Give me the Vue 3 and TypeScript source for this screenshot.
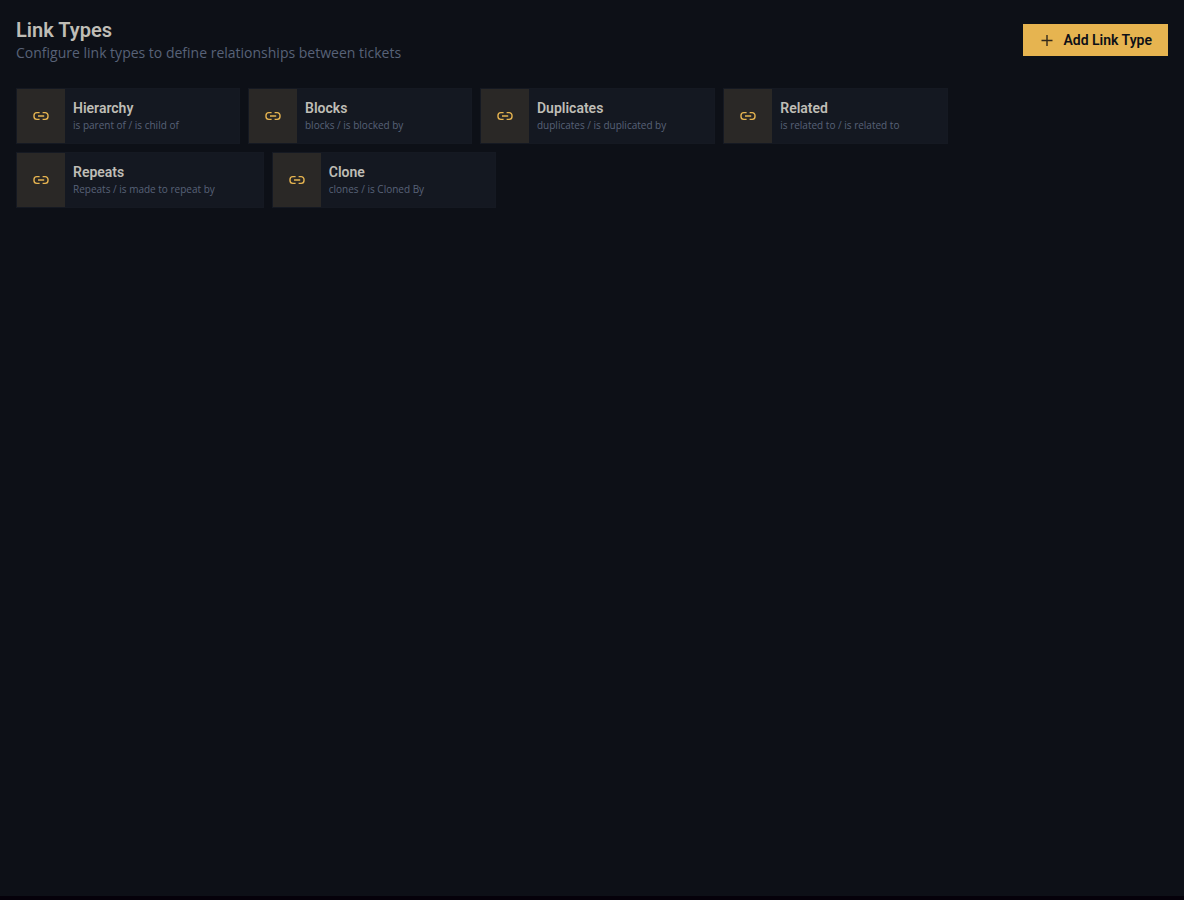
<script setup lang="ts">
interface LinkType {
  id: number
  name: string
  outward: string
  inward: string
}

const linkTypes: LinkType[] = [
  { id: 1, name: 'Hierarchy', outward: 'is parent of', inward: 'is child of' },
  { id: 2, name: 'Blocks', outward: 'blocks', inward: 'is blocked by' },
  { id: 3, name: 'Duplicates', outward: 'duplicates', inward: 'is duplicated by' },
  { id: 4, name: 'Related', outward: 'is related to', inward: 'is related to' },
  { id: 5, name: 'Repeats', outward: 'Repeats', inward: 'is made to repeat by' },
  { id: 6, name: 'Clone', outward: 'clones', inward: 'is Cloned By' },
]
</script>

<template>
  <main class="page">
    <header class="header">
      <div>
        <h1 class="title">Link Types</h1>
        <p class="subtitle">Configure link types to define relationships between tickets</p>
      </div>
      <button class="add" type="button">
        <svg class="add-icon" viewBox="0 0 16 16" aria-hidden="true">
          <path d="M8 3v11M2.5 8.5h11" />
        </svg>
        Add Link Type
      </button>
    </header>
    <ul class="list">
      <li v-for="type in linkTypes" :key="type.id" class="card">
        <div class="badge">
          <svg class="link-icon" viewBox="0 0 16 16" aria-hidden="true">
            <path d="M6.6 4.6H3.8A2.8 2.8 0 0 0 1 7.4v1.2a2.8 2.8 0 0 0 2.8 2.8h2.8" />
            <path d="M9.6 4.6h2.6A2.8 2.8 0 0 1 15 7.4v1.2a2.8 2.8 0 0 1-2.8 2.8H9.6" />
            <path class="bar" d="M5 8h6.2" />
          </svg>
        </div>
        <div class="info">
          <h2 class="name">{{ type.name }}</h2>
          <p class="relation">{{ type.outward }} / {{ type.inward }}</p>
        </div>
      </li>
    </ul>
  </main>
</template>

<style>
body {
  margin: 0;
  background: #05010a;
}
</style>

<style scoped>
.page {
  box-sizing: border-box;
  min-height: calc(100vh - 4px);
  padding: 16px;
  background: #0d1017;
  color: #bfbdb6;
  font-family: Roboto, "Open Sans", sans-serif;
}

.header {
  display: flex;
  align-items: center;
  justify-content: space-between;
  gap: 16px;
  min-height: 48px;
  margin-bottom: 24px;
}

.title {
  margin: 0;
  font-size: 20px;
  line-height: 28px;
  font-weight: 600;
}

.subtitle {
  margin: 0;
  padding-bottom: 2px;
  color: #586278;
  font-family: "Open Sans", sans-serif;
  font-size: 14px;
  line-height: 18px;
}

.add {
  display: flex;
  align-items: center;
  gap: 8px;
  flex-shrink: 0;
  height: 32px;
  padding: 0 16px;
  border: 0;
  background: #e6b450;
  color: #0d1017;
  font-family: inherit;
  font-size: 14px;
  font-weight: 600;
  cursor: pointer;
}

.add-icon {
  width: 16px;
  height: 16px;
  fill: none;
  stroke: #33291a;
  stroke-width: 1.4;
}

.list {
  display: flex;
  flex-wrap: wrap;
  gap: 8px;
  margin: 0;
  padding: 0;
  list-style: none;
}

.card {
  box-sizing: border-box;
  display: flex;
  min-width: 224px;
  min-height: 56px;
  padding-right: 48px;
  border: 1px solid #151922;
  background: #141821;
}

.badge {
  display: flex;
  align-items: center;
  justify-content: center;
  width: 48px;
  background: #2a2826;
}

.link-icon {
  width: 16px;
  height: 16px;
  fill: none;
  stroke: #e6b450;
  stroke-width: 1.4;
}

.bar {
  stroke-width: 2;
  opacity: 0.75;
}

.info {
  padding: 9px 0 9px 8px;
}

.name {
  margin: 0;
  font-size: 14px;
  line-height: 20px;
  font-weight: 600;
}

.relation {
  margin: 0;
  color: #586278;
  font-family: "Open Sans", sans-serif;
  font-size: 10px;
  line-height: 14px;
  white-space: nowrap;
}
</style>
